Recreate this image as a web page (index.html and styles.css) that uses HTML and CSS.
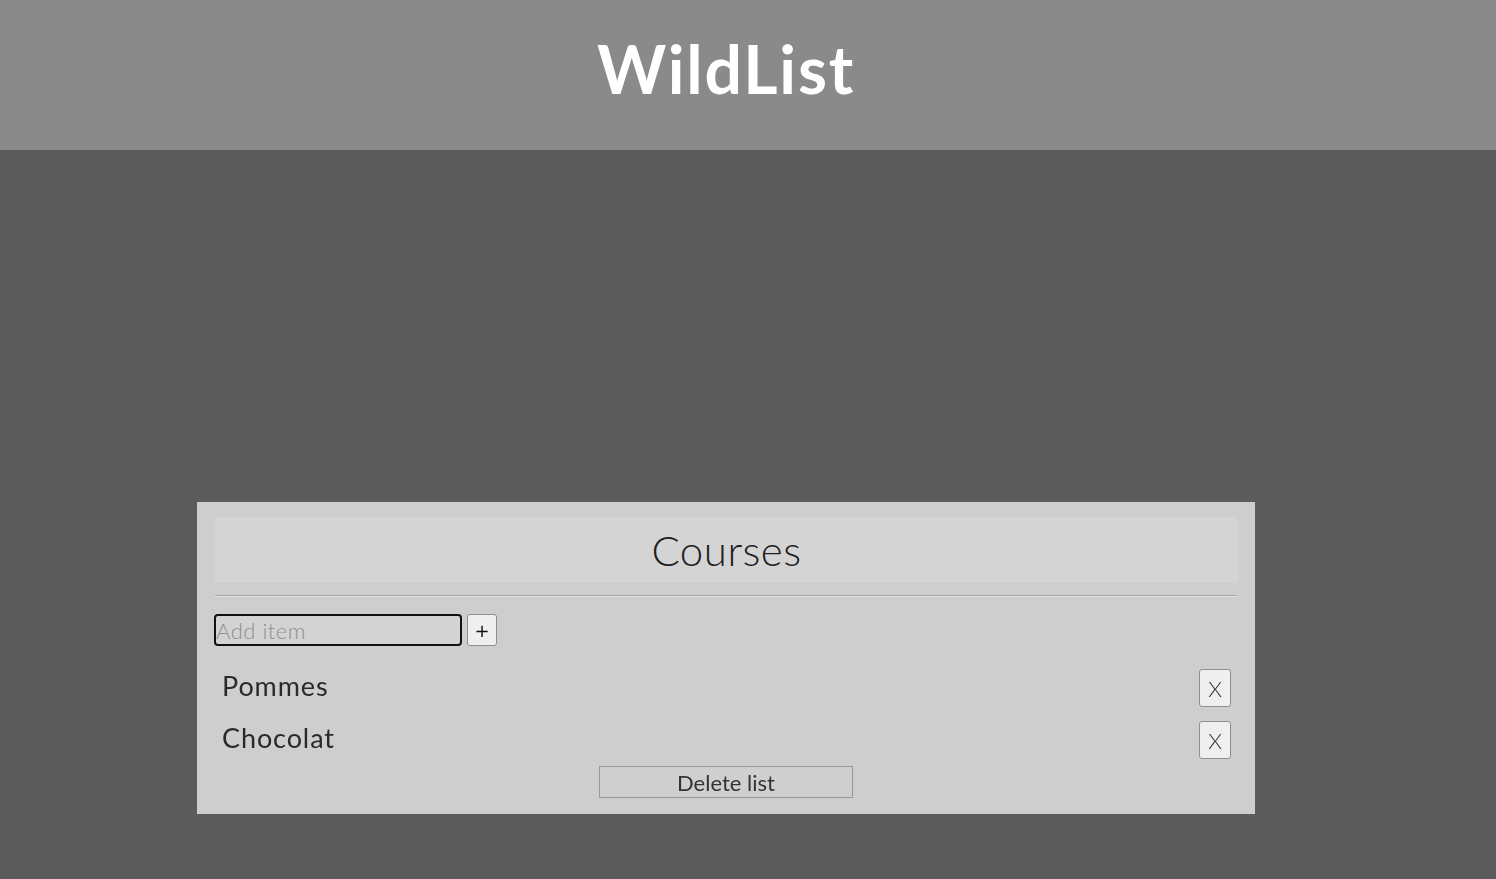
FILE: index.html
```html
<!DOCTYPE html>
<html lang="fr">
<head>
<meta charset="utf-8">
<title>WildList</title>
<link rel="stylesheet" href="styles.css">
</head>
<body>
<header class="topbar">
  <h1 class="brand">WildList</h1>
</header>
<main class="main">
  <section class="card">
    <div class="card-head">
      <h2 class="card-title">Courses</h2>
    </div>
    <hr class="sep">
    <form class="add-row">
      <input class="add-input" type="text" placeholder="Add item" autofocus>
      <button class="add-btn" type="button">+</button>
    </form>
    <ul class="items">
      <li class="item"><span class="item-name">Pommes</span><button class="del-btn" type="button">X</button></li>
      <li class="item"><span class="item-name">Chocolat</span><button class="del-btn" type="button">X</button></li>
    </ul>
    <div class="foot">
      <button class="delete-list" type="button">Delete list</button>
    </div>
  </section>
</main>
</body>
</html>
```
FILE: styles.css
```css
html, body {
  margin: 0;
  padding: 0;
  height: 100%;
}
body {
  background: #5b5b5b;
  font-family: "Lato", "Open Sans", sans-serif;
  color: #222;
}
.topbar {
  height: 150px;
  background: #8a8a8a;
  display: flex;
  align-items: center;
  justify-content: center;
  padding-right: 44px;
  box-sizing: border-box;
}
.brand {
  margin: 0;
  color: #fff;
  font-family: "Lato", sans-serif;
  font-weight: 700;
  font-size: 66px;
  letter-spacing: 1.8px;
  line-height: 1;
  padding-bottom: 12px;
}
.main {
  padding: 352px 0 0 197px;
}
.card {
  width: 1058px;
  box-sizing: border-box;
  background: #cfcecf;
  padding: 15px 17px 16px 17px;
  display: flex;
  flex-direction: column;
}
.card-head {
  height: 66px;
  background: #d4d4d4;
  margin: 0 0 0 1px;
  display: flex;
  align-items: center;
  justify-content: center;
}
.card-title {
  margin: 0;
  font-weight: 300;
  font-size: 42px;
  color: #1e1e1e;
  letter-spacing: 0.5px;
}
.sep {
  margin: 12px 1px 0 1px;
  border: 0;
  border-top: 1px solid #a4a4a4;
  border-bottom: 1px solid #e2e2e2;
  height: 0;
}
.add-row {
  margin: 17px 0 0 0;
  display: flex;
  gap: 5px;
  align-items: center;
}
.add-input {
  width: 248px;
  height: 32px;
  box-sizing: border-box;
  border: 2px solid #111;
  border-radius: 4px;
  background: #d3d3d3;
  font-family: "Lato", sans-serif;
  font-size: 22px;
  padding: 0;
  outline: none;
  color: #222;
}
.add-input::placeholder {
  color: #8f8f8f;
  font-weight: 300;
  letter-spacing: 0.5px;
}
.add-btn {
  width: 30px;
  height: 32px;
  box-sizing: border-box;
  background: #efefef;
  border: 1px solid #8e8e8e;
  border-radius: 3px;
  font-size: 18px;
  padding: 0;
  color: #111;
  font-family: "DejaVu Sans", sans-serif;
}
.items {
  list-style: none;
  margin: 23px 0 0 0;
  padding: 0;
  display: flex;
  flex-direction: column;
  gap: 14px;
}
.item {
  display: flex;
  align-items: center;
  justify-content: space-between;
  padding: 0 7px 0 8px;
  height: 38px;
}
.item-name {
  font-size: 27px;
  font-weight: 400;
  color: #2a2a2a;
  letter-spacing: 0.9px;
  padding-bottom: 5px;
}
.del-btn {
  width: 32px;
  height: 38px;
  box-sizing: border-box;
  background: #efefef;
  border: 1px solid #8e8e8e;
  border-radius: 3px;
  font-family: "Lato", sans-serif;
  font-size: 22px;
  font-weight: 300;
  color: #333;
  padding: 0;
}
.foot {
  display: flex;
  justify-content: center;
  margin-top: 7px;
}
.delete-list {
  width: 254px;
  height: 32px;
  box-sizing: border-box;
  background: #cfcfcf;
  border: 1px solid #999;
  border-radius: 0;
  font-family: "Lato", sans-serif;
  font-size: 22px;
  color: #333;
  padding: 0;
}
```
